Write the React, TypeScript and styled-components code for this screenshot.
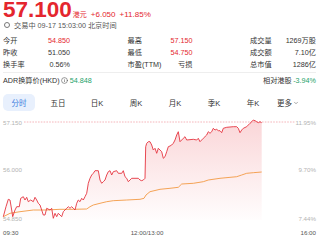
import React from 'react';
import styled, { createGlobalStyle } from 'styled-components';
import { Info, ChevronDown } from 'lucide-react';

const RED = '#e4262e';
const GREEN = '#1e9f6a';

const GlobalStyle = createGlobalStyle`
    html, body {
        margin: 0;
        padding: 0;
        background: #fff;
    }
    body {
        font-family: "Liberation Sans", "Noto Sans CJK SC", sans-serif;
    }
`;

const Page = styled.div`
    width: 320px;
    height: 240px;
    overflow: hidden;
    color: #333;
`;

const Top = styled.div`
    padding: 0 4px 0 3px;
`;

const Quote = styled.div`
    display: flex;
    align-items: baseline;
    height: 20px;
    color: ${RED};
`;

const BigPrice = styled.span`
    font-size: 22.5px;
    font-weight: 700;
    line-height: 20px;
`;

const Unit = styled.span`
    font-size: 7px;
    margin-left: 1px;
`;

const Change = styled.span`
    font-size: 8px;
    margin-left: 4px;
    &:first-of-type {
        margin-left: 7px;
    }
`;

const Status = styled.div`
    display: flex;
    align-items: center;
    height: 10px;
    font-size: 7.2px;
    color: #555;
`;

const Dot = styled.span`
    width: 4px;
    height: 4px;
    border: 1px solid #777;
    border-radius: 50%;
    margin: 0 4px 0 1px;
`;

const Stats = styled.div`
    display: grid;
    grid-template-columns: 67px 65px 66px;
    justify-content: space-between;
    margin-top: 4px;
`;

const Stat = styled.div`
    display: flex;
    justify-content: space-between;
    align-items: center;
    height: 12px;
    font-size: 7.2px;
`;

const StatValue = styled.span<{ $up?: boolean }>`
    color: ${p => (p.$up ? RED : '#333')};
`;

const Divider = styled.div`
    height: 1px;
    background: #eeeeee;
    margin: 2px 0;
`;

const AdrRow = styled.div`
    display: flex;
    justify-content: space-between;
    align-items: center;
    height: 10px;
    margin-top: 2px;
    font-size: 7.2px;
`;

const Inline = styled.span`
    display: flex;
    align-items: center;
    gap: 1.5px;
`;

const Green = styled.span`
    color: ${GREEN};
`;

const Tabs = styled.div`
    display: flex;
    gap: 7px;
    margin-top: 9px;
    height: 17px;
`;

const Tab = styled.div<{ $active?: boolean }>`
    width: 32px;
    height: 17px;
    border-radius: 5px;
    display: flex;
    align-items: center;
    justify-content: center;
    font-size: 7.5px;
    color: ${p => (p.$active ? '#3b7ddd' : '#333')};
    background: ${p => (p.$active ? '#e8f0fd' : 'transparent')};
`;

const MoreTab = styled(Tab)`
    width: auto;
    justify-content: flex-start;
    padding-left: 1px;
    gap: 1px;
`;

const Chart = styled.svg`
    display: block;
`;

const AxisText = styled.text<{ $dark?: boolean }>`
    font-family: "Liberation Sans", sans-serif;
    font-size: 6.2px;
    fill: ${p => (p.$dark ? '#555' : '#b3b3b3')};
`;

const stats: [string, string, boolean][] = [
    ['今开', '54.850', true],
    ['最高', '57.150', true],
    ['成交量', '1269万股', false],
    ['昨收', '51.050', false],
    ['最低', '54.750', true],
    ['成交额', '7.10亿', false],
    ['换手率', '0.56%', false],
    ['市盈(TTM)', '亏损', false],
    ['总市值', '1286亿', false],
];

const tabs = ['分时', '五日', '日K', '周K', '月K', '季K', '年K'];

// traced intraday points, page coords
const price: number[][] = [
    [3.3, 216.7], [6, 206.7], [8.3, 199.3], [10, 200], [11.7, 210], [12.7, 216.7], [15, 210], [16.7, 206.7],
    [19.3, 206.7], [20.7, 198.3], [23.3, 196.7], [25, 200], [26.7, 197.3], [28.3, 201.7], [30.7, 200],
    [33.3, 201.7], [35, 197.3], [36.7, 200], [38.3, 203.3], [40, 205], [41.7, 210], [43.3, 215], [45, 215],
    [46.7, 208.3], [50, 210], [51.7, 208.3], [53.3, 218.3], [55, 213.3], [56.7, 216.7], [58.3, 213.3],
    [60, 215], [61.7, 216.7], [63.3, 211.7], [65, 210], [66.7, 208.3], [68.3, 206.7], [70, 208.3],
    [71.7, 206.7], [73.3, 208.3], [75, 210], [76.7, 203.3], [78.3, 200], [80, 201.7], [81.7, 198.3],
    [83.3, 200], [85, 196.7], [86.7, 193.3], [88.3, 183.3], [90, 178.3], [91.7, 175], [93.3, 173.3],
    [95, 170.7], [98.3, 170.7], [100, 180], [101.7, 183.3], [103.3, 181.7], [105, 180], [106.7, 175],
    [108.3, 171.7], [110, 170.7], [111.7, 175], [113.3, 171.7], [116.7, 170.7], [118.3, 173.3],
    [121.7, 173.3], [123.3, 170.7], [125, 176.7], [126.7, 178.3], [128.3, 181.7], [130, 180],
    [131.7, 178.3], [138.3, 178.3], [140, 180], [141.7, 180.7], [143.3, 180], [145, 178.3],
    [145.7, 146.7], [146.7, 143.3], [148.3, 141.7], [150, 141.7], [151.7, 145], [153.3, 150],
    [155, 148.3], [156.7, 153.3], [158.3, 148.3], [160, 150], [161.7, 151.7], [163.3, 158.3],
    [165, 156.7], [166.7, 151.7], [168.3, 146.7], [170, 146], [171.7, 145], [173.3, 143.3], [175, 140],
    [176.7, 135], [178.3, 131.7], [180, 141.7], [181.7, 140], [183.3, 138.3], [185, 136.7], [186.7, 140],
    [193.3, 139.3], [196.7, 140], [198.3, 138.3], [200, 141.7], [203.3, 138.3], [206.7, 135],
    [208.3, 131.7], [210, 133.3], [211.7, 131.7], [213.3, 128.3], [215, 130], [216.7, 129.3],
    [218.3, 130.7], [220, 130.7], [221.7, 132.7], [223.3, 128.3], [226.7, 127.3], [233.3, 126.7],
    [236.7, 126.7], [238.3, 128.3], [240, 132.7], [241.7, 130], [243.3, 128.3], [246.7, 126.7],
    [248.3, 125], [250, 123.3], [251.7, 121.7], [253.3, 120], [255, 120.7], [256.7, 121.7],
    [258.3, 122.7], [260, 121.7], [261.7, 122.7],
];

const average: number[][] = [
    [3.3, 216.7], [10, 213.3], [20, 211.7], [33.3, 210], [46.7, 210], [60, 209.3], [73.3, 209.3],
    [86.7, 209], [90, 206.7], [93.3, 205], [100, 203.3], [106.7, 201.7], [113.3, 200.7], [126.7, 200],
    [140, 199.3], [144, 198.3], [146, 195], [150, 191.7], [160, 189.3], [170, 188.3], [178.3, 187.3],
    [181.7, 184], [193.3, 183.3], [203.3, 181.7], [208.3, 180], [220, 178.3], [236.7, 176.7],
    [241.7, 175], [246.7, 173.3], [253.3, 172.7], [261.7, 172],
];

const toPath = (pts: number[][]) => pts.map((p, i) => `${i ? 'L' : 'M'}${p[0]},${p[1]}`).join(' ');

const BASE = 220;
const pricePath = toPath(price);
const areaPath = `${pricePath} L${price[price.length - 1][0]},${BASE} L${price[0][0]},${BASE} Z`;

const IntradayChart = () => (
    <Chart width={320} height={129} viewBox="0 111 320 129">
        <defs>
            <linearGradient id="area" x1="0" y1="0" x2="0" y2="1">
                <stop offset="0" stopColor="#e8323c" stopOpacity="0.2" />
                <stop offset="1" stopColor="#e8323c" stopOpacity="0.01" />
            </linearGradient>
        </defs>
        <line x1={24} y1={122} x2={295} y2={122} stroke="#f2a3aa" strokeWidth={0.8} strokeDasharray="1.6 1.2" />
        <path d={areaPath} fill="url(#area)" />
        <path d={toPath(average)} fill="none" stroke="#f39a44" strokeWidth={0.9} />
        <path d={pricePath} fill="none" stroke="#e5343f" strokeWidth={0.9} strokeLinejoin="round" />

        <AxisText x={3} y={122} dominantBaseline="central">57.150</AxisText>
        <AxisText x={3} y={169.5} dominantBaseline="central">56.000</AxisText>
        <AxisText x={3} y={218} dominantBaseline="central">54.850</AxisText>
        <AxisText x={316} y={122} textAnchor="end" dominantBaseline="central">11.95%</AxisText>
        <AxisText x={316} y={169.5} textAnchor="end" dominantBaseline="central">9.70%</AxisText>
        <AxisText x={316} y={218} textAnchor="end" dominantBaseline="central">7.44%</AxisText>

        <AxisText $dark x={3} y={232} dominantBaseline="central">09:30</AxisText>
        <AxisText $dark x={147} y={232} textAnchor="middle" dominantBaseline="central">12:00/13:00</AxisText>
        <AxisText $dark x={316} y={232} textAnchor="end" dominantBaseline="central">16:00</AxisText>
    </Chart>
);

const App = () => (
    <Page>
        <GlobalStyle />
        <Top>
            <Quote>
                <BigPrice>57.100</BigPrice>
                <Unit>港元</Unit>
                <Change>+6.050</Change>
                <Change>+11.85%</Change>
            </Quote>
            <Status>
                <Dot />
                交易中 09-17 15:03:00 北京时间
            </Status>
            <Stats>
                {stats.map(([label, value, up]) => (
                    <Stat key={label}>
                        <span>{label}</span>
                        <StatValue $up={up}>{value}</StatValue>
                    </Stat>
                ))}
            </Stats>
            <Divider />
            <AdrRow>
                <Inline>
                    ADR换算价(HKD)
                    <Info size={7} strokeWidth={2} color="#555" />
                    <Green>54.848</Green>
                </Inline>
                <Inline>
                    相对港股 <Green>-3.94%</Green>
                </Inline>
            </AdrRow>
            <Tabs>
                {tabs.map((t, i) => (
                    <Tab key={t} $active={i === 0}>{t}</Tab>
                ))}
                <MoreTab>
                    更多
                    <ChevronDown size={6} strokeWidth={2} color="#555" />
                </MoreTab>
            </Tabs>
        </Top>
        <IntradayChart />
    </Page>
);

export default App;
